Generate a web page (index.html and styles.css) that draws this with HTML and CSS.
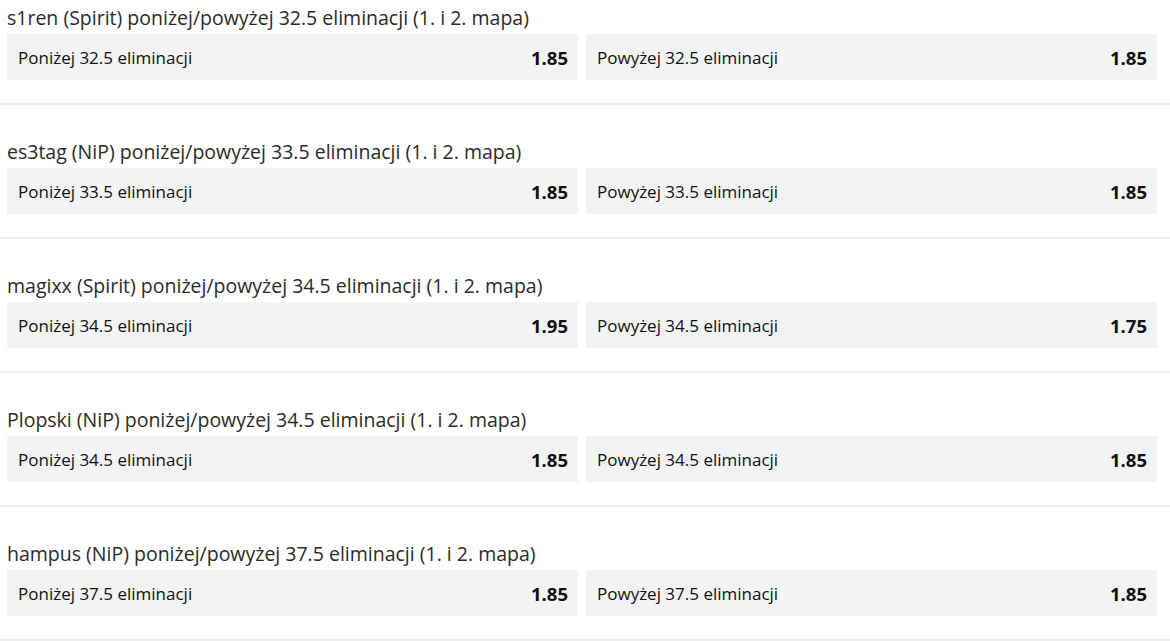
FILE: index.html
```html
<!DOCTYPE html>
<html lang="pl">
<head>
<meta charset="utf-8">
<link rel="stylesheet" href="styles.css">
</head>
<body>
<div class="list">
  <section class="market">
    <h3 class="title">s1ren (Spirit) poniżej/powyżej 32.5 eliminacji (1. i 2. mapa)</h3>
    <div class="odds">
      <div class="cell"><span class="label">Poniżej 32.5 eliminacji</span><span class="price">1.85</span></div>
      <div class="cell"><span class="label">Powyżej 32.5 eliminacji</span><span class="price">1.85</span></div>
    </div>
  </section>
  <section class="market">
    <h3 class="title">es3tag (NiP) poniżej/powyżej 33.5 eliminacji (1. i 2. mapa)</h3>
    <div class="odds">
      <div class="cell"><span class="label">Poniżej 33.5 eliminacji</span><span class="price">1.85</span></div>
      <div class="cell"><span class="label">Powyżej 33.5 eliminacji</span><span class="price">1.85</span></div>
    </div>
  </section>
  <section class="market">
    <h3 class="title">magixx (Spirit) poniżej/powyżej 34.5 eliminacji (1. i 2. mapa)</h3>
    <div class="odds">
      <div class="cell"><span class="label">Poniżej 34.5 eliminacji</span><span class="price">1.95</span></div>
      <div class="cell"><span class="label">Powyżej 34.5 eliminacji</span><span class="price">1.75</span></div>
    </div>
  </section>
  <section class="market">
    <h3 class="title">Plopski (NiP) poniżej/powyżej 34.5 eliminacji (1. i 2. mapa)</h3>
    <div class="odds">
      <div class="cell"><span class="label">Poniżej 34.5 eliminacji</span><span class="price">1.85</span></div>
      <div class="cell"><span class="label">Powyżej 34.5 eliminacji</span><span class="price">1.85</span></div>
    </div>
  </section>
  <section class="market">
    <h3 class="title">hampus (NiP) poniżej/powyżej 37.5 eliminacji (1. i 2. mapa)</h3>
    <div class="odds">
      <div class="cell"><span class="label">Poniżej 37.5 eliminacji</span><span class="price">1.85</span></div>
      <div class="cell"><span class="label">Powyżej 37.5 eliminacji</span><span class="price">1.85</span></div>
    </div>
  </section>
</div>
</body>
</html>
```

FILE: styles.css
```css
html, body {
  margin: 0;
  padding: 0;
  background: #ffffff;
}
body {
  font-family: "Open Sans", "Noto Sans", sans-serif;
  color: #1f1f1f;
  overflow: hidden;
}
.list {
  display: flex;
  flex-direction: column;
}
.market {
  padding: 29px 13px 23px 7px;
  border-bottom: 2px solid #eeeeee;
}
.market:first-child {
  padding-top: 0;
}
.title {
  margin: 0;
  height: 34px;
  display: flex;
  align-items: center;
  font-size: 19.5px;
  font-weight: 400;
  color: #2b2b2b;
  white-space: nowrap;
}
.odds {
  display: grid;
  grid-template-columns: 1fr 1fr;
  gap: 8px;
}
.cell {
  height: 46px;
  background: #f2f3f5;
  display: flex;
  align-items: center;
  justify-content: space-between;
  padding: 0 10px 0 11px;
  font-size: 17px;
  color: #111111;
}
.label {
  font-weight: 400;
}
.price {
  font-size: 18.5px;
  font-weight: 700;
}
```
